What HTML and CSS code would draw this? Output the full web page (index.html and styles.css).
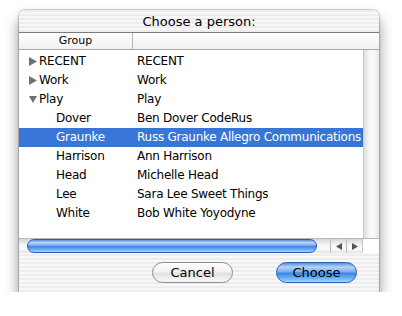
FILE: index.html
```html
<!DOCTYPE html>
<html lang="en">
<head>
    <meta charset="UTF-8">
    <title>Choose a person</title>
    <link rel="stylesheet" href="styles.css">
</head>
<body>
    <div class="window">
        <div class="titlebar">Choose a person:</div>

        <div class="table-header">
            <div class="th th-group">Group</div>
            <div class="th"></div>
        </div>

        <div class="table-body">
            <div class="rows">
                <div class="row">
                    <div class="cell group">
                        <svg class="disclosure" width="8" height="9" viewBox="0 0 8 9"><path d="M0 0 L8 4.5 L0 9 Z" fill="#707070"/></svg>
                        RECENT
                    </div>
                    <div class="cell">RECENT</div>
                </div>
                <div class="row">
                    <div class="cell group">
                        <svg class="disclosure" width="8" height="9" viewBox="0 0 8 9"><path d="M0 0 L8 4.5 L0 9 Z" fill="#707070"/></svg>
                        Work
                    </div>
                    <div class="cell">Work</div>
                </div>
                <div class="row">
                    <div class="cell group">
                        <svg class="disclosure" width="8" height="9" viewBox="0 0 9 8"><path d="M0 0 L9 0 L4.5 8 Z" fill="#707070"/></svg>
                        Play
                    </div>
                    <div class="cell">Play</div>
                </div>
                <div class="row">
                    <div class="cell child">Dover</div>
                    <div class="cell">Ben Dover CodeRus</div>
                </div>
                <div class="row selected">
                    <div class="cell child">Graunke</div>
                    <div class="cell">Russ Graunke Allegro Communications</div>
                </div>
                <div class="row">
                    <div class="cell child">Harrison</div>
                    <div class="cell">Ann Harrison</div>
                </div>
                <div class="row">
                    <div class="cell child">Head</div>
                    <div class="cell">Michelle Head</div>
                </div>
                <div class="row">
                    <div class="cell child">Lee</div>
                    <div class="cell">Sara Lee Sweet Things</div>
                </div>
                <div class="row">
                    <div class="cell child">White</div>
                    <div class="cell">Bob White Yoyodyne</div>
                </div>
            </div>
            <div class="vscroll"></div>
        </div>

        <div class="hscroll">
            <div class="track-start"></div>
            <div class="thumb"></div>
            <div class="track-end"></div>
            <div class="arrow">
                <svg width="6" height="7" viewBox="0 0 6 7"><path d="M6 0 L0 3.5 L6 7 Z" fill="#555"/></svg>
            </div>
            <div class="arrow">
                <svg width="6" height="7" viewBox="0 0 6 7"><path d="M0 0 L6 3.5 L0 7 Z" fill="#555"/></svg>
            </div>
            <div class="corner"></div>
        </div>

        <div class="buttons">
            <button class="btn btn-cancel">Cancel</button>
            <button class="btn btn-default">Choose</button>
        </div>
    </div>
</body>
</html>
```

FILE: styles.css
```css
body {
    margin: 0;
    background: white;
    font-family: 'DejaVu Sans', sans-serif;
    font-size: 12px;
    color: #000;
}

.window {
    width: 360px;
    height: 282px;
    margin: 10px 0 0 19px;
    border-radius: 6px 6px 0 0;
    background: repeating-linear-gradient(to bottom, #ededed 0, #ededed 2px, #f8f8f8 2px, #f8f8f8 4px);
    box-shadow: 0 0 0 1px rgba(0, 0, 0, 0.18), 0 9px 14px rgba(0, 0, 0, 0.45);
    display: flex;
    flex-direction: column;
}

.titlebar {
    height: 22px;
    line-height: 23px;
    text-align: center;
    font-size: 13px;
    border-bottom: 1px solid #7c7c7c;
    border-radius: 6px 6px 0 0;
}

.table-header {
    height: 16px;
    display: flex;
    background: linear-gradient(to bottom, #ffffff, #f1f1f1);
    border-bottom: 1px solid #a8a8a8;
    font-size: 11px;
    line-height: 16px;
}

.th {
    flex: 1;
}

.th-group {
    flex: none;
    width: 113px;
    text-align: center;
    border-right: 1px solid #b4b4b4;
}

.table-body {
    height: 188px;
    display: flex;
    background: white;
}

.rows {
    width: 344px;
    padding-top: 2px;
    overflow: hidden;
}

.row {
    height: 19px;
    line-height: 19px;
    display: flex;
    white-space: nowrap;
    letter-spacing: -0.25px;
}

.row.selected {
    background: #3875d7;
    color: white;
}

.cell.group,
.cell.child {
    width: 114px;
    flex: none;
    box-sizing: border-box;
}

.cell.group {
    padding-left: 10px;
    display: flex;
    align-items: center;
    gap: 2px;
}

.cell.child {
    padding-left: 37px;
}

.cell {
    padding-left: 4px;
}

.disclosure {
    flex: none;
}

.vscroll {
    flex: 1;
    border-left: 1px solid #c8c8c8;
    background: linear-gradient(to right, #dcdcdc, #f6f6f6 35%, #fafafa 60%, #e8e8e8);
}

.hscroll {
    height: 15px;
    display: flex;
    background: linear-gradient(to bottom, #d6d6d6, #f4f4f4 40%, #fbfbfb 70%, #e4e4e4);
    border-top: 1px solid #b9b9b9;
    box-sizing: border-box;
}

.track-start {
    width: 8px;
}

.thumb {
    width: 290px;
    height: 14px;
    box-sizing: border-box;
    border: 1px solid #2a5db4;
    border-radius: 7px;
    background: linear-gradient(to bottom, #5b8fdb 0%, #b8d5f6 22%, #7aaeee 45%, #3d87e6 55%, #6cb0fb 80%, #a9d6ff 100%);
}

.track-end {
    width: 13px;
    border-radius: 0 7px 7px 0;
}

.arrow {
    width: 15px;
    display: flex;
    align-items: center;
    justify-content: center;
    border-left: 1px solid #b8b8b8;
}

.corner {
    flex: 1;
    background: white;
    border-left: 1px solid #c8c8c8;
}

.buttons {
    flex: 1;
    display: flex;
    justify-content: flex-end;
    align-items: flex-start;
    gap: 43px;
    padding: 9px 22px 0 0;
}

.btn {
    width: 81px;
    height: 21px;
    border-radius: 11px;
    font-family: 'DejaVu Sans', sans-serif;
    font-size: 13px;
    color: #000;
    padding: 0;
    box-sizing: border-box;
}

.btn-cancel {
    border: 1px solid #8c8c8c;
    background: linear-gradient(to bottom, #ffffff 0%, #f2f2f2 45%, #e2e2e2 55%, #f8f8f8 100%);
}

.btn-default {
    border: 1px solid #2a5db4;
    background: linear-gradient(to bottom, #5b8fdb 0%, #b8d5f6 22%, #7aaeee 45%, #3d87e6 55%, #6cb0fb 80%, #a9d6ff 100%);
}
```
